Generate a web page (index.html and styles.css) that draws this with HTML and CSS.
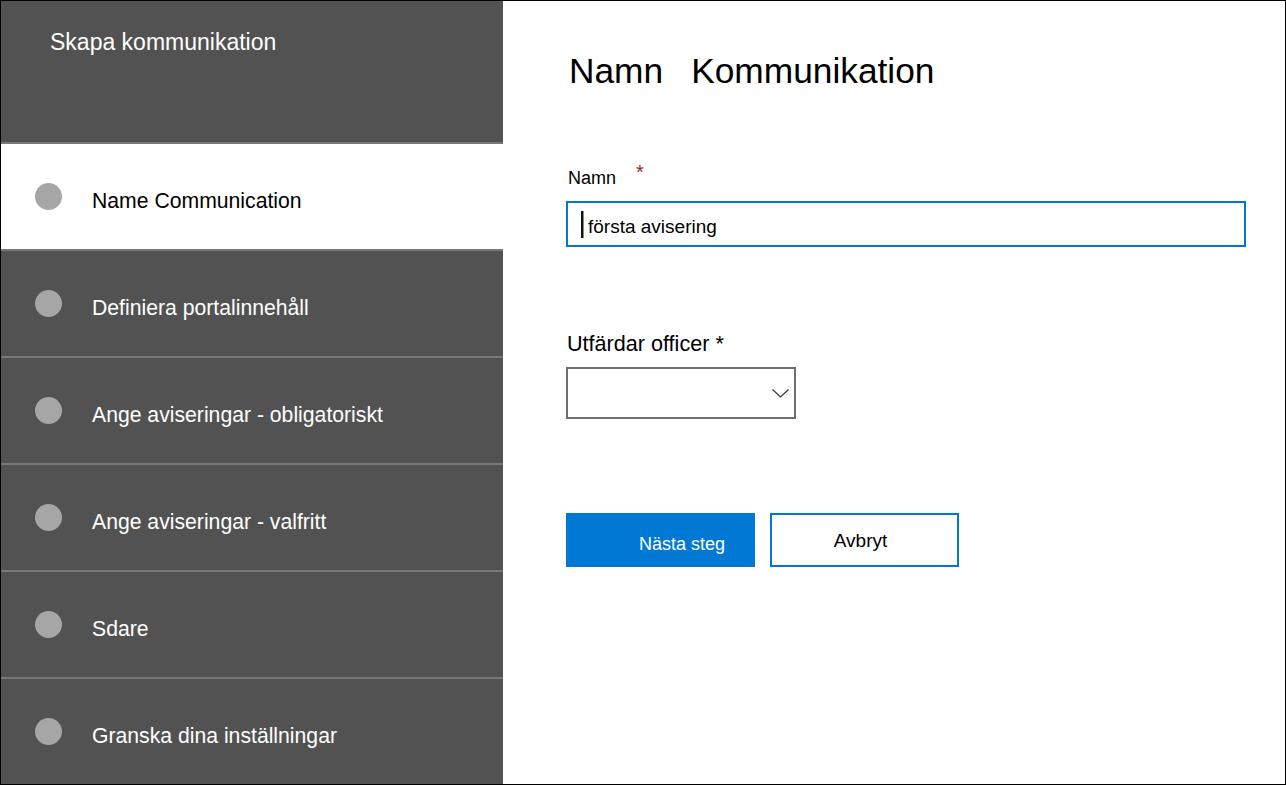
FILE: index.html
```html
<!DOCTYPE html>
<html lang="sv">
<head>
<meta charset="utf-8">
<title>Skapa kommunikation</title>
<link rel="stylesheet" href="styles.css">
</head>
<body>
<div class="frame">
  <aside class="sidebar">
    <div class="side-header">Skapa kommunikation</div>
    <ul class="steps">
      <li class="step active"><span class="dot"></span><span class="step-label">Name Communication</span></li>
      <li class="step"><span class="dot"></span><span class="step-label">Definiera portalinnehåll</span></li>
      <li class="step"><span class="dot"></span><span class="step-label">Ange aviseringar - obligatoriskt</span></li>
      <li class="step"><span class="dot"></span><span class="step-label">Ange aviseringar - valfritt</span></li>
      <li class="step"><span class="dot"></span><span class="step-label">Sdare</span></li>
      <li class="step"><span class="dot"></span><span class="step-label">Granska dina inställningar</span></li>
    </ul>
  </aside>
  <main class="main">
    <h1 class="title"><span class="title-first">Namn</span><span>Kommunikation</span></h1>
    <div class="field">
      <div class="label">Namn<span class="req">*</span></div>
      <div class="textbox"><span class="caret"></span><span class="textbox-value">första avisering</span></div>
    </div>
    <div class="field officer">
      <div class="label-lg">Utfärdar officer *</div>
      <div class="select">
        <svg class="chevron" width="17" height="9" viewBox="0 0 17 9" aria-hidden="true"><polyline points="0.5,0.5 8.5,8 16.5,0.5" fill="none" stroke="#333" stroke-width="1.1"/></svg>
      </div>
    </div>
    <div class="actions">
      <button class="btn btn-primary">Nästa steg</button>
      <button class="btn btn-secondary">Avbryt</button>
    </div>
  </main>
</div>
</body>
</html>
```

FILE: styles.css
```css
* { box-sizing: border-box; }

html, body {
  margin: 0;
  padding: 0;
  background: #fff;
}

body {
  font-family: "Liberation Sans", Arial, sans-serif;
  color: #000;
}

.frame {
  width: 1286px;
  height: 785px;
  border: 1px solid #000;
  display: grid;
  grid-template-columns: 502px 1fr;
  overflow: hidden;
}

/* Sidebar */
.sidebar {
  background: #525252;
  display: flex;
  flex-direction: column;
}

.side-header {
  height: 141px;
  padding: 27px 0 0 49px;
  font-size: 23px;
  line-height: 28px;
  color: #fff;
}

.steps {
  list-style: none;
  margin: 0;
  padding: 0;
}

.step {
  height: 107px;
  border-top: 2px solid #787878;
  display: flex;
  align-items: center;
  padding-left: 34px;
  gap: 30px;
  color: #fff;
}

.step.active {
  background: #fff;
  color: #000;
}

.dot {
  width: 27px;
  height: 27px;
  border-radius: 50%;
  background: #a6a6a6;
  flex: none;
}

.step-label {
  font-size: 21.2px;
  line-height: 24px;
  padding-top: 9px;
}

/* Main */
.main {
  padding: 50px 39px 0 63px;
}

.title {
  margin: 0;
  padding-left: 3px;
  font-size: 35.3px;
  line-height: 40px;
  font-weight: normal;
}

.title-first {
  margin-right: 28px;
}

.field {
  margin-top: 74px;
}

.label {
  padding-left: 2px;
  font-size: 18px;
  line-height: 24px;
}

.req {
  color: #a4262c;
  font-size: 20px;
  margin-left: 20px;
  position: relative;
  top: -5px;
}

.textbox {
  margin-top: 11px;
  height: 46px;
  border: 2px solid #0078d4;
  display: flex;
  align-items: center;
  padding-left: 13px;
}

.caret {
  width: 3px;
  height: 27px;
  border-left: 2px solid #111;
  background: #8a8a8a;
  margin-right: 4px;
}

.textbox-value {
  font-size: 19px;
  line-height: 24px;
  padding-top: 6px;
}

.officer {
  margin-top: 84px;
}

.label-lg {
  padding-left: 1px;
  font-size: 21.6px;
  line-height: 26px;
}

.select {
  margin-top: 10px;
  width: 230px;
  height: 52px;
  border: 2px solid #6e6e6e;
  display: flex;
  align-items: center;
  justify-content: flex-end;
  padding-right: 5px;
}

.chevron {
  display: block;
}

.actions {
  margin-top: 94px;
  display: flex;
  gap: 15px;
}

.btn {
  width: 189px;
  height: 54px;
  margin: 0;
  font-family: inherit;
  cursor: pointer;
}

.btn-primary {
  background: #0078d4;
  border: none;
  color: #fff;
  font-size: 18px;
  line-height: 46px;
  padding: 8px 0 0 73px;
  text-align: left;
}

.btn-secondary {
  background: #fff;
  border: 2px solid #0078d4;
  color: #000;
  font-size: 19px;
  line-height: 48px;
  padding: 2px 8px 0 0;
  text-align: center;
}
```
